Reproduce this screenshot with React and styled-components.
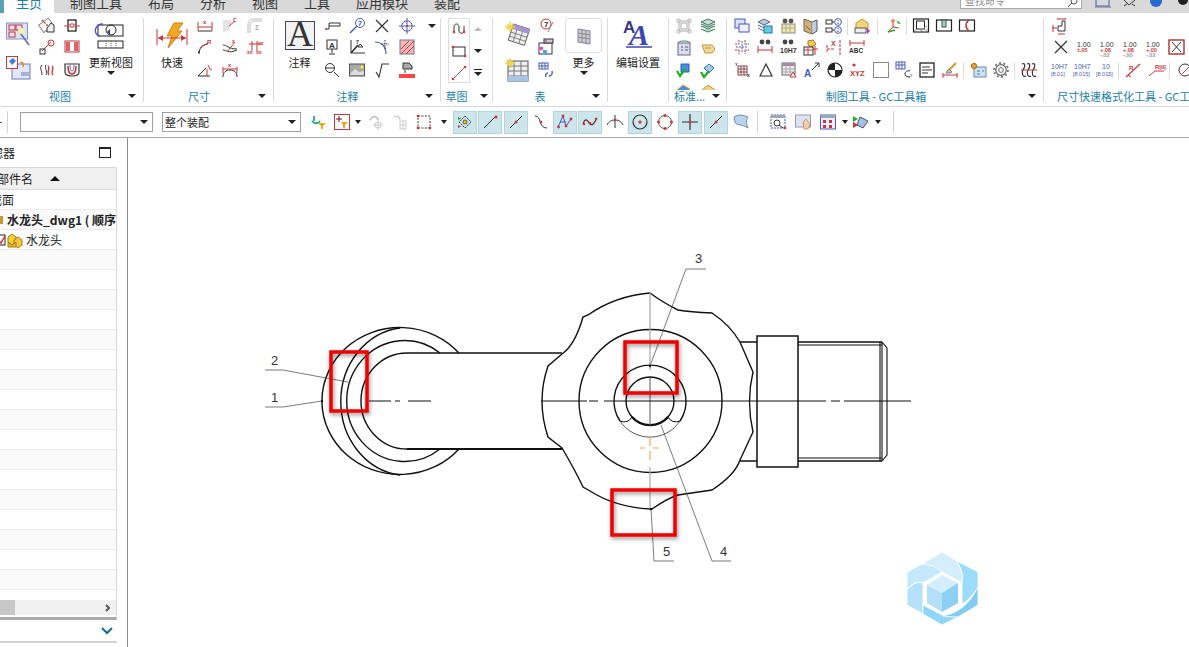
import React from "react";
import styled, { createGlobalStyle } from "styled-components";

const RED = "#c8353a";
const DARK = "#333";
const BLUE = "#4a5ab8";
const TEAL = "#1c7ea6";

const GlobalStyle = createGlobalStyle`
  html, body {
    margin: 0;
    width: 1189px;
    height: 647px;
    overflow: hidden;
    background: #fff;
    font-family: "Noto Sans CJK SC", "Noto Sans", sans-serif;
  }
`;

const Glyph = styled.svg.attrs((p) => {
  const w = p.$w || 16;
  const h = p.$h || w;
  return { width: w, height: h, viewBox: `0 0 ${p.$vw || w} ${p.$vh || h}`, fill: "none", stroke: DARK };
})`
  display: block;
  flex: none;
  overflow: visible;
`;

const Page = styled.div`
  display: flex;
  flex-direction: column;
  width: 1189px;
  height: 647px;
  overflow: hidden;
`;

/* top tabs, cut off by the top of the picture */
const TabBar = styled.div`
  display: flex;
  align-items: flex-start;
  flex: none;
  height: 13px;
  gap: 26px;
  background: #d9d9d9;
  overflow: hidden;
`;

const Tab = styled.div`
  font-size: 13px;
  line-height: 6px;
  height: 13px;
  color: ${(p) => (p.$active ? TEAL : "#333")};
  white-space: nowrap;
  ${(p) =>
    p.$active &&
    `background:#fff;padding:0 12px;margin-left:4px;margin-right:-10px;box-shadow:-4px 0 0 #5a9fb8;`}
`;

const TabTools = styled.div`
  display: flex;
  align-items: flex-start;
  margin-left: auto;
  padding-right: 1px;
  gap: 11px;
`;

const SearchBox = styled.div`
  display: flex;
  justify-content: space-between;
  width: 122px;
  height: 9px;
  margin-right: 2px;
  padding: 0 4px;
  box-sizing: border-box;
  background: #fff;
  border: 1px solid #aaa;
  border-top: 0;
  font-size: 10px;
  line-height: 2px;
  color: #888;
  overflow: hidden;
`;

/* ribbon */
const Ribbon = styled.div`
  display: flex;
  flex: none;
  height: 93px;
  padding-top: 5px;
  box-sizing: border-box;
  background: #fff;
  overflow: hidden;
`;

const Group = styled.div`
  display: flex;
  flex-direction: column;
  flex: none;
  width: ${(p) => p.$w}px;
  height: 84px;
  box-sizing: border-box;
  border-right: ${(p) => (p.$last ? "0" : "1px solid #dcdcdc")};
`;

const GroupBody = styled.div`
  display: flex;
  align-items: flex-start;
  height: 72px;
  padding-left: ${(p) => p.$pl || 0}px;
  gap: ${(p) => p.$gap || 0}px;
  overflow: hidden;
`;

const GroupFoot = styled.div`
  display: grid;
  grid-template-columns: 1fr auto 1fr;
  align-items: center;
  height: 12px;
  padding-right: ${(p) => p.$pr || 7}px;
  font-size: 11px;
  line-height: 12px;
  color: ${TEAL};
  white-space: nowrap;
`;

const FootLabel = styled.span`
  grid-column: 2;
  margin-left: ${(p) => p.$ml || 0}px;
`;

const FootText = styled.div`
  height: 12px;
  padding-left: 13px;
  font-size: 11px;
  line-height: 12px;
  color: ${TEAL};
  white-space: nowrap;
  overflow: hidden;
`;

const Caret = styled.i`
  display: block;
  width: 0;
  height: 0;
  border-left: 4px solid transparent;
  border-right: 4px solid transparent;
  border-top: 4px solid ${(p) => p.$c || "#222"};
  ${(p) => p.$end && "grid-column:3;justify-self:end;"}
`;

const UpCaret = styled(Caret)`
  border-top: 0;
  border-bottom: 4px solid #bbb;
`;

const LargeStack = styled.div`
  display: flex;
  flex-direction: column;
  padding-top: 4px;
  gap: ${(p) => p.$gap || 10}px;
`;

const LargeBtn = styled.div`
  display: flex;
  flex-direction: column;
  align-items: center;
  width: ${(p) => p.$w || 40}px;
  margin-left: ${(p) => p.$ml || 0}px;
  font-size: 11px;
  color: #222;
  white-space: nowrap;
`;

const LargeIcon = styled.div`
  display: flex;
  justify-content: center;
  align-items: center;
  height: 35px;
`;

const LargeLabel = styled.div`
  height: 18px;
  line-height: 18px;
`;

const MoreBox = styled.div`
  display: flex;
  justify-content: center;
  align-items: center;
  box-sizing: border-box;
  width: 37px;
  height: 35px;
  border: 1px solid #ddd;
  border-radius: 4px;
`;

const SmallGrid = styled.div`
  display: grid;
  grid-auto-flow: column;
  grid-template-rows: ${(p) => p.$rows || "21px 23px 16px"};
  grid-auto-columns: 16px;
  column-gap: ${(p) => p.$cg || 9}px;
  margin-left: ${(p) => p.$ml || 0}px;
`;

const CaretCell = styled.div`
  display: flex;
  justify-content: center;
  padding-top: 6px;
`;

const SketchBox = styled.div`
  display: grid;
  grid-template-rows: 21px 23px 20px;
  justify-items: center;
  align-items: center;
  box-sizing: border-box;
  width: 22px;
  height: 65px;
  border: 1px solid #ddd;
`;

const SketchSide = styled.div`
  display: grid;
  grid-template-rows: 21px 23px 20px;
  justify-items: center;
  align-items: center;
  width: 12px;
`;

const LinesCaret = styled.div`
  display: flex;
  flex-direction: column;
  align-items: center;
  gap: 2px;
  &::before {
    content: "";
    width: 8px;
    height: 1px;
    background: #222;
  }
`;

const IconRows = styled.div`
  display: flex;
  flex-direction: column;
`;

const IconRow = styled.div`
  display: flex;
  align-items: flex-start;
  height: ${(p) => p.$h}px;
  gap: 7px;
  padding-left: ${(p) => p.$pl || 0}px;
`;

const RowSep = styled.div`
  flex: none;
  width: 1px;
  height: 17px;
  background: #ddd;
  margin: ${(p) => (p.$wide ? "0" : "0 -1px 0 -2px")};
`;

/* second toolbar */
const Toolbar = styled.div`
  display: flex;
  align-items: center;
  flex: none;
  height: 32px;
  box-sizing: border-box;
  background: #fff;
  border-top: 1px solid #d8d8d8;
  border-bottom: 1px solid #a8a8a8;
`;

const ToolSep = styled.div`
  flex: none;
  width: 1px;
  height: 22px;
  background: #d4d4d4;
  margin: 0 ${(p) => p.$r ?? 12}px 0 ${(p) => p.$l ?? 12}px;
`;

const Grip = styled.i`
  display: block;
  flex: none;
  width: 2px;
  height: 1px;
  margin-right: -2px;
  background: #555;
`;

const SelectBox = styled.div`
  display: flex;
  align-items: center;
  justify-content: space-between;
  box-sizing: border-box;
  width: ${(p) => p.$w}px;
  height: 20px;
  margin-right: ${(p) => p.$mr || 0}px;
  padding: 0 4px 0 2px;
  background: #fff;
  border: 1px solid #a0a0a0;
  font-size: 11px;
  color: #222;
`;

const ToolBtn = styled.div`
  display: flex;
  align-items: center;
  justify-content: center;
  flex: none;
  box-sizing: border-box;
  width: 24px;
  height: 23px;
  margin-right: ${(p) => p.$mr ?? 1}px;
  background: ${(p) => (p.$on ? "#cce6ec" : "transparent")};
  border: 1px solid ${(p) => (p.$on ? "#b2d4dc" : "transparent")};
`;

const ToolCaret = styled(Caret)`
  margin: 0 ${(p) => p.$r ?? 4}px 0 ${(p) => p.$l ?? 3}px;
  border-left-width: 3px;
  border-right-width: 3px;
`;

/* left navigator and canvas */
const Main = styled.div`
  display: flex;
  flex: 1;
  min-height: 0;
`;

const Navigator = styled.div`
  display: flex;
  flex-direction: column;
  flex: none;
  width: 128px;
  box-sizing: border-box;
  border-right: 1px solid #8a8a8a;
`;

const NavHead = styled.div`
  display: flex;
  align-items: center;
  justify-content: space-between;
  width: 117px;
  height: 29px;
  padding-right: 6px;
  box-sizing: border-box;
  font-size: 12px;
  color: #222;
  overflow: hidden;
`;

const Clipped = styled.span`
  margin-left: ${(p) => p.$ml}px;
  white-space: nowrap;
`;

const MaxBox = styled.i`
  display: block;
  box-sizing: border-box;
  width: 12px;
  height: 11px;
  border: 1px solid #222;
  border-top-width: 2px;
`;

const NavTable = styled.div`
  width: 117px;
  height: 453px;
  box-sizing: border-box;
  border-top: 1px solid #d8d8d8;
  border-right: 1px solid #d8d8d8;
  border-bottom: 3px solid #aaa;
  overflow: hidden;
  display: flex;
  flex-direction: column;
`;

const NavColumns = styled.div`
  display: flex;
  align-items: center;
  flex: none;
  height: 21px;
  gap: 17px;
  background: #f0f0f0;
  border-bottom: 1px solid #ddd;
  font-size: 12px;
  color: #222;
  overflow: hidden;
`;

const SortUp = styled(Caret)`
  border-top: 0;
  border-bottom: 5px solid #111;
  border-left-width: 5px;
  border-right-width: 5px;
`;

const NavRow = styled.div`
  display: flex;
  align-items: center;
  flex: none;
  height: 20px;
  box-sizing: border-box;
  border-bottom: 1px solid #ececec;
  background: ${(p) => (p.$alt ? "#fafafa" : "#fff")};
  font-size: 12px;
  font-weight: ${(p) => (p.$bold ? 700 : 400)};
  color: #222;
  white-space: nowrap;
  overflow: hidden;
`;

const FolderEdge = styled.i`
  display: block;
  flex: none;
  width: 3px;
  height: 8px;
  margin-right: -3px;
  background: #c9962f;
`;

const ScrollTrack = styled.div`
  display: flex;
  align-items: center;
  justify-content: space-between;
  flex: none;
  height: 15px;
  margin-top: auto;
  margin-bottom: 2px;
  padding-right: 4px;
  background: #f0f0f0;
`;

const ScrollThumb = styled.i`
  display: block;
  width: 15px;
  height: 15px;
  background: #c8c8c8;
`;

const NavFoot = styled.div`
  display: flex;
  justify-content: flex-end;
  align-items: center;
  width: 117px;
  height: 23px;
  padding-right: 4px;
  box-sizing: border-box;
  border-bottom: 2px solid #d4d4d4;
`;

const Canvas = styled.div`
  flex: 1;
  min-width: 0;
  background: #fff;
`;

const DrawingSvg = styled.svg`
  display: block;
`;

const Callout = styled.text`
  font-family: "Liberation Sans Narrow", "Liberation Sans", sans-serif;
  font-size: 13px;
  fill: #333;
  stroke: none;
`;

/* small ribbon icons */
const T = ({ x, y, s = 5, c = RED, w = 700, children }) => (
  <text x={x} y={y} fontSize={s} fill={c} stroke="none" fontWeight={w} fontFamily="Liberation Sans, sans-serif">
    {children}
  </text>
);

const icons = {
  sketchView: <><rect x="1.5" y="3" width="12" height="9" stroke="#888" transform="rotate(-35 7 8)" /><path d="M3 2l7 7" stroke={RED} strokeDasharray="2 1" strokeWidth="1.4" /><path d="M8 14h7V7l-3-2-4 5z" fill="#eee" /></>,
  viewLink: <><path d="M3 12l9-9" stroke={RED} /><rect x="1" y="10" width="5" height="5" /><circle cx="12" cy="4" r="3" stroke={RED} /></>,
  breakView: <><path d="M3 3c-3 3 0 5 0 10M7 3c-2 3 2 6 0 10" /><path d="M9 4c3 2-2 6 1 9M13 4c3 2-2 6 1 9" stroke={RED} strokeWidth="1.3" /></>,
  viewBox: <><rect x="4" y="2" width="8" height="11" strokeWidth="1.4" /><path d="M0 8h4M12 8h4M6 6h4v3H6z" stroke={RED} /></>,
  hatchBand: <><rect x="1" y="2" width="14" height="11" stroke={RED} /><rect x="2" y="3" width="4" height="9" fill={RED} stroke="none" opacity=".75" /><rect x="10" y="3" width="4" height="9" fill={RED} stroke="none" opacity=".75" /></>,
  section: <><path d="M1 2h14v8c0 3-3 4-7 4S1 13 1 10z" strokeWidth="1.2" /><path d="M4 4c0 6 2 8 4 8s4-2 4-8" stroke={RED} strokeWidth="1.6" /><path d="M6 3c0 4 1 6 2 6s2-2 2-6" stroke={BLUE} /></>,
  dimHoriz: <><path d="M1 4v9M15 4v9" stroke={RED} /><path d="M1 9h14" stroke={RED} /><path d="M1 13h14" /><T x="6" y="6" s="6">x</T></>,
  dimRad: <><path d="M2 15c0-6 4-10 9-10" /><path d="M3 9l8-5" stroke={RED} /><T x="10" y="5" s="6">R</T><path d="M1 13h2M2 12v2" /></>,
  dimAngle: <><path d="M1 14h12M1 14l8-8" /><path d="M10 7v7" stroke={RED} /><path d="M11 3l2 4 2 1" stroke={RED} /></>,
  dimChamfer: <><path d="M1 14c6 0 8-4 8-8V2H1z" fill="#e4e4e4" stroke="none" /><path d="M7 8l6-5" stroke={RED} /><T x="11" y="4" s="5">C</T></>,
  dimCurve: <><path d="M1 6c4 0 5 4 14 4M1 11c4 0 5 4 14 0" /><path d="M5 13L13 3" stroke={RED} /><T x="10" y="4" s="5">x</T></>,
  dimArc: <><path d="M1 15c0-5 3-7 7-7s7 2 7 7" /><path d="M1 5v6M15 5v6M1 7h14" stroke={RED} /><T x="6" y="5" s="6">x</T></>,
  dimFade: <><path d="M1 15V7c0-4 2-6 6-6h8M3 15V7c0-3 2-4 4-4h8" stroke="#bbb" /><T x="8" y="12" s="7" c="#aaa">Σ</T></>,
  dimGrid: <><path d="M2 5h12M5 2v10M10 2v10" stroke={RED} /><T x="0" y="15" s="5">xx</T><T x="9" y="15" s="5">xx</T><T x="11" y="6" s="5">xx</T></>,
  leader: <><path d="M2 11h3V5h11v3H5" /><circle cx="2" cy="11" r="1" fill={RED} stroke="none" /></>,
  aStand: <><rect x="3" y="1" width="10" height="9" /><T x="5" y="8.5" s="8" c={DARK}>A</T><path d="M8 10v4M5 15h6" /></>,
  zoomGlass: <><circle cx="6" cy="6" r="4.5" /><path d="M2 6h8M10 10l5 5" /></>,
  balloon: <><circle cx="11" cy="5" r="4.5" stroke={BLUE} /><T x="9" y="8" s="7" c={BLUE}>7</T><path d="M8 8L1 15" stroke={BLUE} strokeWidth="1.4" /></>,
  corner: <><path d="M2 1v13h14" /><path d="M2 14l7-8" stroke="#333" strokeWidth="1.6" /><path d="M9 8l5 0-3-3z" /><T x="7" y="5" s="5" c={DARK}>7</T></>,
  picture: <><rect x="0.5" y="2" width="15" height="12" fill="#aaa" stroke="#555" /><path d="M1 12l5-5 4 3 5-1v4H1z" fill="#ddd" stroke="none" /><circle cx="13" cy="5" r="1.5" fill="#fe3" stroke="none" /></>,
  cross: <path d="M2 2l12 12M14 2L2 14" strokeWidth="1.2" />,
  arcCross: <><path d="M1 3c7 0 11 5 11 12" stroke={BLUE} strokeWidth="1.2" /><path d="M11 1v9M7 5h8" strokeDasharray="1.5 1" /></>,
  sqrt: <path d="M2 10l3 5 3-13h7" strokeWidth="1.1" />,
  target: <><circle cx="8" cy="8" r="5.2" stroke={BLUE} /><path d="M8 0v16M0 8h16" stroke={BLUE} /><circle cx="8" cy="8" r="1" fill={RED} stroke="none" /></>,
  hatch: <><rect x="1" y="1" width="14" height="14" stroke="#778" fill="#f0b8b8" /><path d="M2 10l8-8M2 15L15 2M7 15l8-8" stroke={RED} /></>,
  paint: <><path d="M4 1h6l3 3v3H4z" fill="#aaa" /><path d="M6 8v3" /><rect x="0" y="12" width="16" height="4" fill="#f44" stroke="none" /></>,
  spline: <><path d="M3 9V5c0-4 5-4 5 0v4c0 3 5 3 5 0V4" stroke={DARK} /><circle cx="3" cy="10" r="1.3" fill={RED} stroke="none" /><circle cx="13" cy="10" r="1.3" fill={RED} stroke="none" /></>,
  rect: <><rect x="2" y="3" width="12" height="9" /><circle cx="2" cy="3" r="1.3" fill={RED} stroke="none" /><circle cx="14" cy="12" r="1.3" fill={RED} stroke="none" /></>,
  line: <><path d="M2 14L14 2" stroke="#b05050" /><circle cx="2" cy="14" r="1.3" fill={RED} stroke="none" /><circle cx="14" cy="2" r="1.3" fill={RED} stroke="none" /></>,
  tableAsk: <><circle cx="8" cy="6" r="5" stroke={RED} /><T x="6" y="9" s="8" c={DARK}>7</T><path d="M10 14l5-10" stroke="#888" /></>,
  tableColor: <><rect x="1" y="4" width="13" height="11" fill="#fff" stroke="#335" /><rect x="1" y="8" width="4" height="3" fill="#f4a" stroke="none" /><rect x="5" y="11" width="4" height="4" fill="#4ad" stroke="none" /><rect x="6" y="0" width="9" height="4" fill="#ccc" /><circle cx="8" cy="2" r="1" fill="#f3c" stroke="none" /></>,
  tableSync: <><rect x="1" y="1" width="9" height="6" stroke={BLUE} /><path d="M1 4h9M4 1v6M7 1v6" stroke={BLUE} /><path d="M14 9c1 3-1 5-3 5M8 15c-1-2 0-4 2-4" stroke={BLUE} strokeWidth="1.4" /></>,
  stdFrame: <><rect x="3" y="3" width="10" height="10" stroke="#aaa" /><rect x="5" y="5" width="6" height="6" stroke="#aaa" /><path d="M1 1h3v3H1zM12 1h3v3h-3zM1 12h3v3H1zM12 12h3v3h-3z" stroke="#bbb" /></>,
  stdStack: <><path d="M1 4l7-3 7 3-7 3zM1 8l7 3 7-3M1 11l7 3 7-3M1 6l7 3 7-3" stroke="#3a7a60" fill="#c8dcd4" /></>,
  stdList: <><ellipse cx="8" cy="3" rx="6" ry="2" stroke="#486" /><rect x="2" y="3" width="12" height="12" fill="#dde" stroke="#668" /><path d="M5 7h2M9 7h3M5 10h2M9 10h3" stroke="#558" /></>,
  stdTag: <><path d="M2 5h10l3 4-3 4H5z" fill="#f5d9a0" stroke="#b93" /><path d="M5 8h6" stroke="#b93" /></>,
  stdCheck: <><path d="M5 1h8v8H5z" fill="#4a8ce0" stroke="#26a" /><path d="M1 8l3 5 5-7" stroke="#2a2" strokeWidth="2.2" /></>,
  stdWrench: <><path d="M4 5l5-4 5 4-5 5z" fill="#a9c9e9" stroke="#37a" /><path d="M1 9l3 5 5-6" stroke="#2a2" strokeWidth="2.2" /></>,
  stdBlue: <path d="M1 6l6-5 7 4-6 4z" fill="#4a8ce0" stroke="#e8a030" />,
  stdGold: <><path d="M2 6l6-5 7 5v8H2z" fill="#f3d080" stroke="#b93" /></>,
  gcWin: <><rect x="1" y="1" width="10" height="9" fill="#d8e0f4" stroke={BLUE} /><rect x="5" y="6" width="10" height="8" fill="#eef" stroke={BLUE} /></>,
  gcTable: <><path d="M1 4l6-3 6 3-6 3z" fill="#bcd" stroke="#568" /><path d="M1 7l6 3M1 10l6 3" stroke="#568" /><rect x="7" y="8" width="8" height="7" fill="#6cd" stroke="#27a" /></>,
  gcBino: <><rect x="2" y="6" width="13" height="9" fill="#f4e8a0" stroke="#888" /><path d="M2 10h13M6 6v9M10 6v9" stroke="#aaa" /><circle cx="5" cy="3" r="2.4" fill="#555" stroke="none" /><circle cx="11" cy="3" r="2.4" fill="#555" stroke="none" /></>,
  gcBook: <><path d="M1 1l8 3v12l-8-3z" fill="#cbb27d" stroke="#764" /><path d="M9 4l5-2v11l-5 3" fill="#bcd" stroke="#557" /><path d="M3 8l4 4" stroke={RED} /></>,
  gcNums: <><rect x="0" y="2" width="6" height="4" /><rect x="0" y="10" width="6" height="4" /><path d="M6 4h2M6 12h2" /><circle cx="12" cy="4" r="3.4" stroke={BLUE} /><circle cx="12" cy="12" r="3.4" stroke={BLUE} /><T x="10.5" y="6" s="5" c={BLUE} w={400}>1</T><T x="10.5" y="14" s="5" c={BLUE} w={400}>2</T></>,
  gcBox: <><path d="M2 5l6-4 6 4v6H2z" fill="#f3d67a" stroke="#b93" /><rect x="1" y="10" width="11" height="5" fill="#eee" stroke="#555" /><path d="M13 10l3 3-3 3z" fill="#a3c" stroke="none" /></>,
  gcAxes: <><path d="M3 14l5-5V2M8 9l6 1" stroke={RED} /><path d="M3 14l7-2" stroke="#2a2" strokeWidth="1.4" /><circle cx="8" cy="3" r="1.5" stroke="#e83" /><path d="M12 3l3 3" stroke="#2a2" strokeWidth="1.4" /></>,
  frameHatch: <><rect x="0.5" y="1" width="15" height="13" stroke="#222" strokeWidth="1.2" /><rect x="3.500" y="3" width="8" height="8" stroke="#222" /><path d="M1 13l3-2M6 14l8-6M11 14l4-3" stroke="#999" /></>,
  frameTop: <><rect x="0.5" y="2" width="15" height="11" stroke="#222" strokeWidth="1.2" /><rect x="6" y="2" width="4" height="7" fill="#a8d0a0" stroke="#357" /></>,
  frameArc: <><rect x="0.5" y="2" width="15" height="11" stroke="#222" strokeWidth="1.2" /><path d="M10 2C6 5 6 10 10 13" stroke={RED} strokeWidth="1.500" /><path d="M7 6l2-2" stroke={BLUE} /></>,
  gcCrossA: <><path d="M1 5h4M5 1v4M11 1v4M11 5h4M1 11h4M5 11v4M11 11v4M11 11h4" stroke={RED} strokeDasharray="2 1" /><path d="M2 8h12" stroke={BLUE} strokeDasharray="2 1" /><path d="M8 2v12" stroke={BLUE} strokeDasharray="2 1" /></>,
  gcBinoDim: <><circle cx="5" cy="3" r="2.4" fill="#444" stroke="none" /><circle cx="11" cy="3" r="2.4" fill="#444" stroke="none" /><path d="M1 7v7M15 7v7M1 11h14" stroke={RED} /></>,
  gcBino10: <><circle cx="5" cy="3" r="2.4" fill="#444" stroke="none" /><circle cx="11" cy="3" r="2.4" fill="#444" stroke="none" /><T x="0" y="14" s="7" c="#333">10H7</T></>,
  gcStamp: <><path d="M5 2l5-1 3 4-4 3-4-2z" fill="#f3c94c" stroke="#a72" /><rect x="1" y="8" width="9" height="8" fill="#fff" stroke="#333" /><path d="M1 11h9M5 8v8M10 10h5M12 7v9" stroke={RED} /></>,
  gcDimX: <><path d="M1 6v8M1 10h8M14 1v15" stroke={RED} strokeDasharray="3 1" /><T x="5" y="7" s="7">X</T></>,
  gcAbc: <><path d="M1 1v6M15 1v6M1 4h14" stroke={RED} /><T x="0" y="14" s="6.5" c="#333">ABC</T></>,
  gcYx: <><rect x="3" y="4" width="9" height="9" stroke="#844" /><path d="M3 7h9M3 10h9M6 4v9M9 4v9" stroke="#844" /><T x="0" y="4" s="4" c="#333">Y</T><T x="12" y="15" s="5" c="#333">x</T></>,
  triangle: <path d="M2 14L8 2l6 12z" strokeWidth="1.2" />,
  tableTri: <><rect x="1" y="1" width="13" height="12" fill="#eee" stroke="#666" /><rect x="1" y="1" width="13" height="3" fill="#a8a" stroke="none" /><path d="M1 7h13M1 10h13M5 4v9M9 4v9" stroke="#aaa" /><path d="M9 15l3-5 3 5z" fill="#fff" stroke={RED} /></>,
  aArrow: <><T x="0" y="15" s="10" c={BLUE}>A</T><path d="M8 8l7-7M11 1h4v4" stroke="#333" /></>,
  halfDisc: <><circle cx="8" cy="8" r="7" fill="#fff" stroke="#222" strokeWidth="1.2" /><path d="M8 8V1a7 7 0 0 0-7 7zM8 8v7a7 7 0 0 0 7-7z" fill="#222" stroke="none" /></>,
  xyz: <><circle cx="4" cy="3" r="1.6" fill={RED} stroke="none" /><T x="0" y="14" s="7.5">XYZ</T></>,
  emptySq: <rect x="0.5" y="0.5" width="15" height="15" stroke="#888" />,
  tableLink: <><rect x="0" y="0" width="9" height="7" stroke={BLUE} /><path d="M0 3h9M3 0v7M6 0v7" stroke={BLUE} /><path d="M14 9c-3-1-5 1-5 3s2 3 5 3" /><T x="14" y="15" s="4" c="#333" w={400}>2</T></>,
  textBox: <><rect x="1" y="1" width="14" height="14" stroke="#222" strokeWidth="1.3" /><path d="M3 5h8M3 8h10M3 11h6" strokeWidth="1.2" /></>,
  brush: <><path d="M1 11v5M15 11v5M1 13h14" stroke={RED} /><path d="M5 10l5-5 4-4" stroke="#c93" strokeWidth="2" /><path d="M4 11l3-4 3 3-2 1z" fill="#ccc" stroke="#777" /></>,
  props: <><rect x="4" y="5" width="12" height="10" fill="#cfe0f3" stroke="#68a" /><circle cx="4" cy="4" r="2.6" fill="#e8a040" stroke="#a60" /><path d="M7 9h3M12 9h2M7 12h3" stroke="#48a" /></>,
  gear: <><circle cx="8" cy="8" r="2.4" stroke="#666" /><circle cx="8" cy="8" r="5.3" stroke="#666" strokeWidth="1.2" /><circle cx="8" cy="8" r="7" strokeDasharray="2 2.4" strokeWidth="1.8" stroke="#777" /></>,
  spring: <><path d="M1 2c4-2 3 3 1 6s0 8 3 6M6 2c4-2 3 3 1 6s0 8 3 6M11 2c4-2 3 3 1 6s0 8 3 6" strokeWidth="1.2" /><path d="M0 8h16" stroke={RED} /></>,
  stepDim: <><path d="M6 13V8h4V3h3v10z" /><path d="M6 0v1M13 0v1M5 1h9M1 7v7M0 10h5M6 16h7" stroke={RED} /></>,
  boxX: <><rect x="1" y="1" width="15" height="14" stroke="#a33" strokeWidth="1.4" /><path d="M4 3l9 10M13 3L4 13" /></>,
  fit1: <><T x="0" y="7" s="7" c={BLUE} w={400}>10H7</T><T x="0" y="14" s="5.5" c={BLUE} w={400}>[8.01]</T></>,
  fit2: <><T x="0" y="7" s="7" c={BLUE} w={400}>10H7</T><T x="-1" y="14" s="5.5" c={BLUE} w={400}>[8.015]</T></>,
  fit3: <><T x="5" y="7" s="7" c={BLUE} w={400}>10</T><T x="-1" y="14" s="5.5" c={BLUE} w={400}>[8.015]</T></>,
  rDiag: <><path d="M1 15L15 2" stroke={RED} strokeWidth="1.1" /><path d="M3 13l3 2" stroke={RED} /><T x="4" y="8" s="6">R</T></>,
  rLeader: <><path d="M1 14l6-5h9" stroke={RED} /><T x="7" y="7" s="6">R|0|</T></>,
  circleArrow: <><circle cx="9" cy="8" r="6" stroke="#333" /><path d="M5 13l9-9" stroke={RED} /></>,
  filterBack: <><path d="M1 7c2 3 6 3 8 0" stroke="#2a8" strokeWidth="1.8" /><path d="M3 2v5" stroke="#2a8" strokeWidth="1.8" /><path d="M7 9h8l-3 3v3h-2v-3z" fill="#e8a820" stroke="none" /></>,
  filterPt: <><rect x="0.5" y="0.5" width="15" height="15" stroke={RED} /><path d="M5 2v6M2 5h6" stroke="#333" /><circle cx="5" cy="5" r="1.2" fill={RED} stroke="none" /><path d="M7 8h7l-3 3v3H9v-3z" fill="#e8a820" stroke="none" /></>,
  fadeUndo: <><path d="M2 6c2-5 7-4 8 0" stroke="#bbb" strokeWidth="1.4" /><circle cx="10" cy="11" r="3" stroke="#ccc" /><path d="M10 6v10M5 11h10" stroke="#ccc" /></>,
  fadeDim: <><path d="M2 3c3-2 6 0 6 3" stroke="#ccc" strokeWidth="1.4" /><rect x="8" y="7" width="6" height="8" stroke="#ccc" /><path d="M8 11h6M11 7v8" stroke="#ccc" /></>,
  dashBox: <><rect x="2" y="2" width="12" height="12" strokeDasharray="2 1.4" /><g fill={RED} stroke="none"><circle cx="2" cy="2" r="1.3" /><circle cx="14" cy="14" r="1.3" /><circle cx="2" cy="14" r="1.3" /></g></>,
  snapAll: <><path d="M8 2l6 6-6 6-6-6z" strokeDasharray="2 1" /><circle cx="8" cy="8" r="2" fill="#fc0" stroke="#555" /><path d="M1 3l3 1.500-3 1.500z" fill="#2a2" stroke="none" /><path d="M1 11l3 1.500-3 1.500z" fill={RED} stroke="none" /></>,
  snapEnd: <><path d="M2 14L14 2" /><circle cx="14" cy="3" r="1.5" fill={RED} stroke="none" /></>,
  snapMid: <><path d="M2 14L14 2" /><circle cx="8" cy="8" r="1.5" fill={RED} stroke="none" /></>,
  snapCurve: <><path d="M2 2c7 0 3 12 12 12" /><circle cx="8" cy="8" r="1.3" fill={RED} stroke="none" /></>,
  snapPoly: <><path d="M1 13L6 2l3 10 5-7" stroke={BLUE} /><path d="M3 8h6" stroke={BLUE} /><g fill={RED} stroke="none"><circle cx="6" cy="2" r="1.4" /><circle cx="1.500" cy="13" r="1.4" /><circle cx="9" cy="12" r="1.4" /><circle cx="14" cy="5" r="1.4" /></g></>,
  snapWave: <><path d="M1 10c3-8 5-2 7 0s4 0 7-6" stroke="#622" strokeWidth="1.2" /><g fill={RED} stroke="none"><circle cx="2" cy="10" r="1.3" /><circle cx="8" cy="9" r="1.3" /><circle cx="14" cy="5" r="1.3" /></g></>,
  snapArc: <><path d="M0 11c2-4 5-5 8-5s6 1 8 5" /><path d="M8 1v13" /><circle cx="8" cy="6" r="1.3" fill={RED} stroke="none" /></>,
  snapCenter: <><circle cx="8" cy="8" r="7" strokeWidth="1.2" /><circle cx="8" cy="8" r="1.6" fill={RED} stroke="none" /></>,
  snapQuad: <><circle cx="8" cy="8" r="6.5" stroke="#555" /><g fill={RED} stroke="none"><circle cx="8" cy="1.500" r="1.500" /><circle cx="8" cy="14.500" r="1.500" /><circle cx="1.500" cy="8" r="1.500" /><circle cx="14.500" cy="8" r="1.500" /></g></>,
  snapCross: <><path d="M8 0v16M0 8h16" strokeWidth="1.2" /><circle cx="8" cy="8" r="1.5" fill={RED} stroke="none" /></>,
  snapSurf: <><path d="M1 3c5-3 9-2 14 0-2 3-2 6 0 11-6-4-13-3-13-6z" fill="#b8d4f0" stroke="#789" /></>,
  camFit: <><rect x="1" y="1" width="14" height="13" stroke={BLUE} strokeDasharray="2 1" /><rect x="1" y="1" width="14" height="3" fill="#9ab" stroke="none" /><circle cx="7" cy="9" r="3" /><path d="M9 11l4 3" /><circle cx="15" cy="14" r="1.3" fill={RED} stroke="none" /></>,
  camHand: <><rect x="0.5" y="1" width="15" height="12" fill="#dbe3f4" stroke="#99a" /><path d="M8 8l3-3 4 5-2 5h-4z" fill="#f0cfa8" stroke="#c96" /></>,
  camGrid: <><rect x="0.5" y="1" width="15" height="14" fill="#eef" stroke={BLUE} /><rect x="0.5" y="1" width="15" height="3" fill="#9ab" stroke="none" /><g fill={RED} stroke="none"><rect x="3" y="6" width="3" height="3" /><rect x="9" y="6" width="3" height="3" /><rect x="3" y="11" width="3" height="3" /><rect x="9" y="11" width="3" height="3" /></g></>,
  camPlay: <><path d="M7 3l8 4-5 7-6-3z" fill="#a8c0e4" stroke="#456" /><path d="M0 2l5 3-5 3z" fill="#2a2" stroke="none" /><path d="M0 8l5 3-5 3z" fill={RED} stroke="none" /></>,
};

const Ico = ({ n, w = 16, h }) => (
  <Glyph $w={w} $h={h || w} $vw={16} $vh={16}>
    {icons[n]}
  </Glyph>
);

const Tol = ({ plus, minus }) => (
  <Glyph $w={16} $h={19}>
    <T x="1" y="8" s="7" c="#333" w={400}>1.00</T>
    <T x="1" y="13" s="5.500" w={700}>{plus}</T>
    <T x="1" y="18" s="5.500" c="#999" w={700}>{minus}</T>
  </Glyph>
);

const NewViewIcon = () => (
  <Glyph $w={34} $h={30}>
    <rect x="4" y="4" width="25" height="11" fill="#fff" stroke="#222" />
    <circle cx="17" cy="9" r="5" stroke="#222" />
    <rect x="4" y="20" width="25" height="7" stroke="#222" />
    <path d="M12 20v7M17 20v7M22 20v7" strokeDasharray="1 1" stroke="#555" />
    <path d="M9 3C1 3-2 13 6 15" stroke="#5a50d0" strokeWidth="1.4" />
    <path d="M16 8l-3 3 3 3z" fill="#2a3a90" stroke="none" />
  </Glyph>
);

const QuickIcon = () => (
  <Glyph $w={32} $h={26}>
    <path d="M18 0h9l-6 8h5L12 25l4-12h-5z" fill="#f4a820" stroke="#d08010" />
    <path d="M1 6v16M31 6v16" stroke={RED} />
    <path d="M2 15h28" stroke={RED} />
    <path d="M2 15l5-3v6zM30 15l-5-3v6z" fill={RED} stroke="none" />
  </Glyph>
);

const NoteIcon = () => (
  <Glyph $w={30} $h={29}>
    <rect x="0.500" y="0.500" width="29" height="28" fill="#f2f2f2" stroke="#444466" />
    <text x="2" y="25" fontSize="36" fontFamily="Liberation Serif, serif" fontWeight="400" fill="#333" stroke="none" textLength="26" lengthAdjust="spacingAndGlyphs">A</text>
  </Glyph>
);

const ViewA = () => (
  <Glyph $w={24} $h={24}>
    <rect x="0.500" y="1" width="21" height="16" fill="#dde2f4" stroke="#8890c0" />
    <rect x="3" y="3" width="6" height="5" stroke={RED} />
    <rect x="10" y="3" width="6" height="5" stroke={RED} />
    <rect x="3" y="10" width="6" height="5" stroke={RED} />
    <path d="M12 8l11 15" stroke="#5a6ab0" strokeWidth="1.500" />
    <circle cx="15" cy="9" r="3" fill="#f6f3a0" stroke="none" />
  </Glyph>
);

const ViewB = () => (
  <Glyph $w={25} $h={24}>
    <rect x="6" y="8" width="18" height="15" fill="#e3e8f8" stroke="#7078c0" />
    <rect x="0.500" y="0.500" width="11" height="12" fill="#fff" stroke={RED} />
    <path d="M3 5l4-3 3 3-4 4z" fill="#3f80d0" stroke="none" />
    <path d="M14 7c3-2 4 2 3 4" stroke="#e88020" strokeWidth="1.500" />
    <path d="M15 19h8M15 17h8" stroke="#7078c0" />
  </Glyph>
);

const TableNew = ({ low }) => (
  <Glyph $w={24} $h={24}>
    <g transform={low ? "" : "rotate(18 12 12) translate(3 1) scale(.85)"}>
      <rect x="3" y="3" width="20" height="20" fill="#eee" stroke="#555" />
      <path d="M3 8h20M3 13h20M3 18h20M9 3v20M16 3v20" stroke="#777" />
      <rect x="3" y={low ? 18 : 3} width="20" height="5" fill={low ? "#a8c4e8" : "#a695d4"} stroke="none" />
    </g>
    <path d="M5 0v10M0 5h10M2 2l6 6M8 2L2 8" stroke="#ecd84a" strokeWidth="1.500" />
  </Glyph>
);

const MoreIcon = () => (
  <Glyph $w={14} $h={16}>
    <path d="M1 1l12 2v13L1 14z" fill="#ccc" stroke="#8878c0" />
    <path d="M1 5l12 2M1 9l12 2M5 2v13M9 3v13" stroke="#888" />
  </Glyph>
);

const EditAIcon = () => (
  <Glyph $w={30} $h={29}>
    <text x="0" y="12" fontSize="17" fontFamily="Liberation Sans, sans-serif" fontWeight="700" fill="#3e3a80" stroke="none">A</text>
    <text x="6" y="24" fontSize="30" fontFamily="Liberation Serif, serif" fontWeight="700" fontStyle="italic" fill="#3c48b0" stroke="none">A</text>
    <path d="M3 26h26" stroke="#3c48b0" strokeWidth="1.500" />
  </Glyph>
);

const CubeBadge = () => (
  <Glyph $w={16} $h={16}>
    <path d="M1 5l4-3 4 3v5l-4 3-4-3z" fill="#f4d040" stroke="#a87810" />
    <path d="M7 8l4-3 4 3v5l-4 3-4-3z" fill="#f4c840" stroke="#a87810" />
    <path d="M1 10l4 3 4-3v5H1z" fill="#e8b830" stroke="#a87810" />
  </Glyph>
);

const Check = () => (
  <Glyph $w={7} $h={12}>
    <rect x="-5" y="1" width="10" height="10" stroke="#222" />
    <path d="M-2 6l3 3 4-7" stroke={RED} strokeWidth="1.500" />
  </Glyph>
);

const Chevron = () => (
  <Glyph $w={12} $h={8}>
    <path d="M1 1l5 5 5-5" stroke="#146a8a" strokeWidth="2" />
  </Glyph>
);

const ScrollRight = () => (
  <Glyph $w={8} $h={8}>
    <path d="M2 1l3 3-3 3" stroke="#555" strokeWidth="2" />
  </Glyph>
);

/* the drawing itself, viewBox keeps the screen coordinates of the picture */
const Box = ({ x, y, w, h }) => (
  <rect x={x} y={y} width={w} height={h} stroke="#f00000" strokeWidth="3.5" fill="none" filter="url(#boxShadow)" />
);

const Drawing = () => (
  <DrawingSvg width="1061" height="509" viewBox="128 138 1061 509" fill="none" stroke="#111">
    <defs>
      <filter id="boxShadow" x="-30%" y="-30%" width="160%" height="160%">
        <feDropShadow dx="1" dy="2" stdDeviation="2" floodColor="#000" floodOpacity="0.45" />
      </filter>
    </defs>

    {/* left boss */}
    <path d="M459 353A78 73.500 0 1 0 459 449" strokeWidth="1.400" />
    <path d="M400 328A67 74 0 0 0 400 475" strokeWidth="1.400" />
    <path d="M440 353A58 60.500 0 1 0 440 449" strokeWidth="1.400" />
    <path d="M407 353A46 48 0 0 0 407 449" strokeWidth="1.400" />
    <path d="M407 353H562" strokeWidth="1.600" />
    <path d="M407 449H562" strokeWidth="2.200" />

    {/* knob */}
    <path
      strokeWidth="1.400"
      d="M650 293Q615 296 588 315L583 317Q575 345 562 354L548 366Q536 401 548 437L562 448Q575 470 583 487L590 491Q615 507 650 509L652 509Q668 498 678 495L712 490Q735 475 740 460L753 432Q746 401 753 372L740 342Q730 325 712 313Q690 312 678 310Q662 302 650 293Z"
    />
    <circle cx="650.500" cy="401" r="71.500" strokeWidth="1.400" />
    <path d="M620 421A36 36 0 1 1 680 421" strokeWidth="1.400" />
    <path d="M620 421A36 36 0 0 0 680 421" strokeWidth="0.700" />
    <circle cx="650" cy="401" r="24" strokeWidth="1.400" />
    <path d="M632 417A24 24 0 0 0 668 417" strokeWidth="2.400" />
    <path d="M620 421Q628 424 632 417M680 421Q672 424 668 417" strokeWidth="1" />

    {/* axis */}
    <path d="M650 292V370M650 467V509" stroke="#aaa" strokeWidth="1.200" />
    <path d="M650 378V426" stroke="#555" />
    <path d="M369 401H391M395 401H400M408 401H431M541 401H587M589 401H598M604 401H826M831 401H840M844 401H911" strokeWidth="1.200" />
    <path d="M640 448H645M653 448H659M650 437V446M650 451V460" stroke="#f0a860" strokeWidth="1.200" />

    {/* hex nut and thread */}
    <path d="M740 342H757M740 461H757" strokeWidth="1.400" />
    <rect x="757" y="336" width="41" height="131" strokeWidth="1.500" />
    <path d="M798 342H882M798 461H882" strokeWidth="1.400" />
    <path d="M798 345H882M798 458H882" strokeWidth="1" />
    <path d="M880 342V461M882 342V461M882 342L887 348V455L882 461" strokeWidth="1.100" />

    {/* leaders */}
    <g stroke="#444" strokeWidth="0.700">
      <path d="M265 370H283L348 382" />
      <path d="M265 407H283L322 401" />
      <path d="M706 269H686L650 366" />
      <path d="M731 561H712L661 425" />
      <path d="M674 561H654L651 509" />
    </g>
    <circle cx="322" cy="401" r="1.200" fill="#111" stroke="none" />
    <circle cx="650" cy="366" r="1.200" fill="#111" stroke="none" />
    <circle cx="651" cy="509" r="1.200" fill="#111" stroke="none" />
    <Callout x="271" y="365">2</Callout>
    <Callout x="271" y="402">1</Callout>
    <Callout x="695" y="263">3</Callout>
    <Callout x="720" y="556">4</Callout>
    <Callout x="663" y="556">5</Callout>

    {/* highlight boxes */}
    <Box x={331} y={352} w={36} h={59} />
    <Box x={625} y={342} w={52} h={51} />
    <Box x={612} y={490} w={63} h={45} />

    {/* watermark logo */}
    <g stroke="#fff" strokeWidth="0.800">
      <path d="M922 564L942 552L957 561Q965 575 962 583L942 572Q932 565 922 564Z" fill="#d5eefb" />
      <path d="M907 572L922 564Q935 565 942 572L923 583Q915 579 907 590Z" fill="#c5e9fc" />
      <path d="M907 590Q915 580 923 583V614L907 605Z" fill="#b5e2fa" />
      <path d="M923 605L942 615Q950 617 958 617L942 625L923 614Z" fill="#8fd6fb" />
      <path d="M978 587V605L958 617Q950 617 943 616Q966 612 978 587Z" fill="#80ccf2" />
      <path d="M957 561L978 572V587Q970 600 962 604V583Q965 575 957 561Z" fill="#9bdbfb" />
    </g>
    <g stroke="none">
      <path d="M942 575L958 583L942 593L927 585Z" fill="#d3effd" />
      <path d="M927 585L942 593V612L927 603Z" fill="#b4dff9" />
      <path d="M958 583V603L942 612V593Z" fill="#8dd0f6" />
    </g>
  </DrawingSvg>
);

const rowsAfter = Array.from({ length: 17 }, (_, i) => i);

export default function App() {
  return (
    <Page>
      <GlobalStyle />
      <TabBar>
        <Tab $active>主页</Tab>
        <Tab>制图工具</Tab>
        <Tab>布局</Tab>
        <Tab>分析</Tab>
        <Tab>视图</Tab>
        <Tab>工具</Tab>
        <Tab>应用模块</Tab>
        <Tab>装配</Tab>
        <TabTools>
          <SearchBox>
            <span>查找命令</span>
            <Glyph $w={10} $h={8}>
              <circle cx="7" cy="1" r="3" stroke="#555" />
              <path d="M1 7l4-4" stroke="#555" />
            </Glyph>
          </SearchBox>
          <Glyph $w={16} $h={8}>
            <rect x="1" y="-4" width="13" height="10" stroke="#4a5ab8" />
            <path d="M0 7h16" stroke="#777" />
          </Glyph>
          <Glyph $w={16} $h={8}>
            <path d="M2 0l5 5 6-5M2 6l3-2M13 6l-3-2" stroke="#333" />
          </Glyph>
          <Glyph $w={14} $h={8}>
            <circle cx="7" cy="1" r="6" fill="#2a6ad0" stroke="none" />
          </Glyph>
          <Glyph $w={14} $h={8}>
            <circle cx="9" cy="0" r="5" fill="#222" stroke="none" />
          </Glyph>
        </TabTools>
      </TabBar>

      <Ribbon>
        <Group $w={144}>
          <GroupBody $pl={6}>
            <LargeStack>
              <ViewA />
              <ViewB />
            </LargeStack>
            <SmallGrid $ml={8}>
              <Ico n="sketchView" /><Ico n="viewLink" /><Ico n="breakView" />
              <Ico n="viewBox" /><Ico n="hatchBand" /><Ico n="section" />
            </SmallGrid>
            <LargeBtn $w={46} $ml={8}>
              <LargeIcon><NewViewIcon /></LargeIcon>
              <LargeLabel>更新视图</LargeLabel>
              <Caret $c="#222" />
            </LargeBtn>
          </GroupBody>
          <GroupFoot><FootLabel $ml={-16}>视图</FootLabel><Caret $end /></GroupFoot>
        </Group>

        <Group $w={130}>
          <GroupBody $pl={8} $gap={5}>
            <LargeBtn>
              <LargeIcon><QuickIcon /></LargeIcon>
              <LargeLabel>快速</LargeLabel>
            </LargeBtn>
            <SmallGrid>
              <Ico n="dimHoriz" /><Ico n="dimRad" /><Ico n="dimAngle" />
              <Ico n="dimChamfer" /><Ico n="dimCurve" /><Ico n="dimArc" />
              <Ico n="dimFade" /><Ico n="dimGrid" /><span />
            </SmallGrid>
          </GroupBody>
          <GroupFoot><FootLabel $ml={-12}>尺寸</FootLabel><Caret $end /></GroupFoot>
        </Group>

        <Group $w={167}>
          <GroupBody $pl={7} $gap={6}>
            <LargeBtn>
              <LargeIcon><NoteIcon /></LargeIcon>
              <LargeLabel>注释</LargeLabel>
            </LargeBtn>
            <SmallGrid>
              <Ico n="leader" /><Ico n="aStand" /><Ico n="zoomGlass" />
              <Ico n="balloon" /><Ico n="corner" /><Ico n="picture" />
              <Ico n="cross" /><Ico n="arcCross" /><Ico n="sqrt" />
              <Ico n="target" /><Ico n="hatch" /><Ico n="paint" />
              <CaretCell><Caret /></CaretCell><span /><span />
            </SmallGrid>
          </GroupBody>
          <GroupFoot><FootLabel $ml={-12}>注释</FootLabel><Caret $end /></GroupFoot>
        </Group>

        <Group $w={52}>
          <GroupBody $pl={7} $gap={2}>
            <SketchBox>
              <Ico n="spline" /><Ico n="rect" /><Ico n="line" />
            </SketchBox>
            <SketchSide>
              <UpCaret /><Caret /><LinesCaret><Caret /></LinesCaret>
            </SketchSide>
          </GroupBody>
          <GroupFoot $pr={4}><FootLabel $ml={-16}>草图</FootLabel><Caret $end /></GroupFoot>
        </Group>

        <Group $w={115}>
          <GroupBody $pl={12}>
            <LargeStack $gap={12}>
              <TableNew />
              <TableNew low />
            </LargeStack>
            <SmallGrid $ml={9}>
              <Ico n="tableAsk" /><Ico n="tableColor" /><Ico n="tableSync" />
            </SmallGrid>
            <LargeBtn $w={37} $ml={11}>
              <MoreBox><MoreIcon /></MoreBox>
              <LargeLabel>更多</LargeLabel>
              <Caret />
            </LargeBtn>
          </GroupBody>
          <GroupFoot><FootLabel $ml={-12}>表</FootLabel><Caret $end /></GroupFoot>
        </Group>

        <Group $w={61}>
          <GroupBody>
            <LargeBtn $w={60}>
              <LargeIcon><EditAIcon /></LargeIcon>
              <LargeLabel>编辑设置</LargeLabel>
            </LargeBtn>
          </GroupBody>
        </Group>

        <Group $w={58}>
          <GroupBody $pl={7}>
            <SmallGrid $rows="22px 23px 21px 16px" $cg={8}>
              <Ico n="stdFrame" /><Ico n="stdList" /><Ico n="stdCheck" /><Ico n="stdBlue" />
              <Ico n="stdStack" /><Ico n="stdTag" /><Ico n="stdWrench" /><Ico n="stdGold" />
            </SmallGrid>
          </GroupBody>
          <GroupFoot $pr={6}><FootLabel $ml={-10}>标准...</FootLabel><Caret $end /></GroupFoot>
        </Group>

        <Group $w={317}>
          <GroupBody>
            <IconRows>
              <IconRow $h={21} $pl={7}>
                <Ico n="gcWin" /><Ico n="gcTable" /><Ico n="gcBino" /><Ico n="gcBook" /><Ico n="gcNums" />
                <RowSep />
                <Ico n="gcBox" />
                <RowSep $wide />
                <Ico n="gcAxes" />
                <RowSep />
                <Ico n="frameHatch" /><Ico n="frameTop" /><Ico n="frameArc" />
              </IconRow>
              <IconRow $h={23} $pl={7}>
                <Ico n="gcCrossA" /><Ico n="gcBinoDim" /><Ico n="gcBino10" /><Ico n="gcStamp" /><Ico n="gcDimX" /><Ico n="gcAbc" />
              </IconRow>
              <IconRow $h={16} $pl={8}>
                <Ico n="gcYx" /><Ico n="triangle" /><Ico n="tableTri" /><Ico n="aArrow" /><Ico n="halfDisc" /><Ico n="xyz" />
                <Ico n="emptySq" /><Ico n="tableLink" /><Ico n="textBox" /><Ico n="brush" />
                <RowSep />
                <Ico n="props" /><Ico n="gear" />
                <RowSep />
                <Ico n="spring" />
              </IconRow>
            </IconRows>
          </GroupBody>
          <GroupFoot><FootLabel $ml={-11}>制图工具 - GC工具箱</FootLabel><Caret $end /></GroupFoot>
        </Group>

        <Group $w={145} $last>
          <GroupBody>
            <IconRows>
              <IconRow $h={21} $pl={8}><Ico n="stepDim" /></IconRow>
              <IconRow $h={23} $pl={9}>
                <Ico n="cross" />
                <Tol plus="±.05" minus="" />
                <Tol plus="+.08" minus="-.02" />
                <Tol plus="+.08" minus="-.00" />
                <Tol plus="+.00" minus="-.02" />
                <Ico n="boxX" />
              </IconRow>
              <IconRow $h={16} $pl={7}>
                <Ico n="fit1" /><Ico n="fit2" /><Ico n="fit3" />
                <RowSep />
                <Ico n="rDiag" /><Ico n="rLeader" />
                <RowSep />
                <Ico n="circleArrow" />
              </IconRow>
            </IconRows>
          </GroupBody>
          <FootText>尺寸快速格式化工具 - GC工具箱</FootText>
        </Group>
      </Ribbon>

      <Toolbar>
        <Grip />
        <ToolSep $l={7} $r={12} />
        <SelectBox $w={133} $mr={9}><span /><Caret /></SelectBox>
        <SelectBox $w={139} $mr={6}><span>整个装配</span><Caret /></SelectBox>
        <ToolBtn $mr={-1}><Ico n="filterBack" /></ToolBtn>
        <ToolBtn $mr={0}><Ico n="filterPt" /></ToolBtn>
        <ToolCaret $l={1} $r={3} />
        <ToolBtn $mr={0}><Ico n="fadeUndo" /></ToolBtn>
        <ToolBtn $mr={0}><Ico n="fadeDim" /></ToolBtn>
        <ToolBtn $mr={1}><Ico n="dashBox" /></ToolBtn>
        <ToolCaret $l={4} $r={6} />
        <ToolBtn $on><Ico n="snapAll" /></ToolBtn>
        <ToolBtn $on $mr={2}><Ico n="snapEnd" /></ToolBtn>
        <ToolBtn $on><Ico n="snapMid" /></ToolBtn>
        <ToolBtn $mr={0}><Ico n="snapCurve" /></ToolBtn>
        <ToolBtn $on><Ico n="snapPoly" /></ToolBtn>
        <ToolBtn $on><Ico n="snapWave" /></ToolBtn>
        <ToolBtn><Ico n="snapArc" /></ToolBtn>
        <ToolBtn $on><Ico n="snapCenter" /></ToolBtn>
        <ToolBtn><Ico n="snapQuad" /></ToolBtn>
        <ToolBtn $on $mr={2}><Ico n="snapCross" /></ToolBtn>
        <ToolBtn $on><Ico n="snapMid" /></ToolBtn>
        <ToolBtn $mr={0}><Ico n="snapSurf" /></ToolBtn>
        <ToolSep $l={4} $r={8} />
        <ToolBtn><Ico n="camFit" /></ToolBtn>
        <ToolBtn><Ico n="camHand" /></ToolBtn>
        <ToolBtn $mr={0}><Ico n="camGrid" /></ToolBtn>
        <ToolCaret $l={2} $r={1} />
        <ToolBtn $mr={0}><Ico n="camPlay" /></ToolBtn>
        <ToolCaret $l={2} $r={0} />
        <ToolSep $l={12} />
      </Toolbar>

      <Main>
        <Navigator>
          <NavHead>
            <Clipped $ml={-9}>滤器</Clipped>
            <MaxBox />
          </NavHead>
          <NavTable>
            <NavColumns>
              <Clipped $ml={-3}>部件名</Clipped>
              <SortUp />
            </NavColumns>
            <NavRow><Clipped $ml={-10}>截面</Clipped></NavRow>
            <NavRow $bold $alt>
              <FolderEdge />
              <Clipped $ml={7}>水龙头_dwg1 ( 顺序约束 )</Clipped>
            </NavRow>
            <NavRow>
              <Check />
              <CubeBadge />
              <Clipped $ml={3}>水龙头</Clipped>
            </NavRow>
            {rowsAfter.map((i) => (
              <NavRow key={i} $alt={i % 2 === 0} />
            ))}
            <ScrollTrack>
              <ScrollThumb />
              <ScrollRight />
            </ScrollTrack>
          </NavTable>
          <NavFoot><Chevron /></NavFoot>
        </Navigator>
        <Canvas>
          <Drawing />
        </Canvas>
      </Main>
    </Page>
  );
}
